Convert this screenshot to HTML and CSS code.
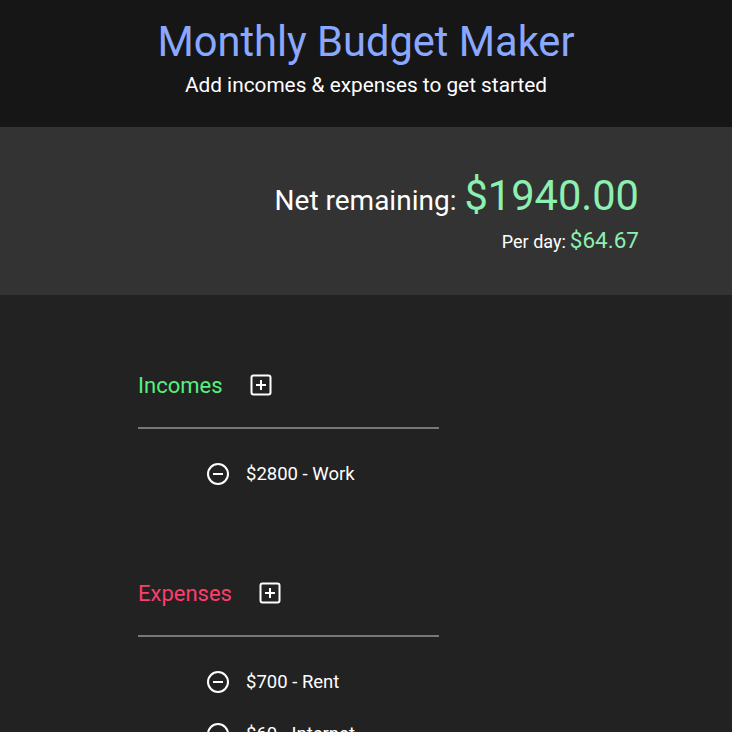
FILE: index.html
```html
<!DOCTYPE html>
<html lang="en">
<head>
<meta charset="utf-8">
<title>Monthly Budget Maker</title>
<link rel="stylesheet" href="styles.css">
</head>
<body>
<header class="header">
  <h1 class="title">Monthly Budget Maker</h1>
  <p class="subtitle">Add incomes &amp; expenses to get started</p>
</header>
<section class="summary">
  <div class="net"><span class="net-label">Net remaining:</span> <span class="net-value">$1940.00</span></div>
  <div class="perday"><span class="perday-label">Per day:</span> <span class="perday-value">$64.67</span></div>
</section>
<main class="lists">
  <section class="group">
    <div class="group-head">
      <h2 class="group-title incomes">Incomes</h2>
      <button class="icon-btn" aria-label="Add income">
        <svg width="22" height="22" viewBox="0 0 22 22"><rect x="1.5" y="1.5" width="19" height="19" rx="2" fill="none" stroke="#fff" stroke-width="2"/><path d="M11 6v10M6 11h10" stroke="#fff" stroke-width="2"/></svg>
      </button>
    </div>
    <hr class="rule">
    <ul class="items">
      <li class="item">
        <svg class="minus" width="24" height="24" viewBox="0 0 24 24"><circle cx="12" cy="12" r="10" fill="none" stroke="#fff" stroke-width="2"/><path d="M7 12h10" stroke="#fff" stroke-width="2"/></svg>
        <span class="item-text">$2800 - Work</span>
      </li>
    </ul>
  </section>
  <section class="group">
    <div class="group-head">
      <h2 class="group-title expenses">Expenses</h2>
      <button class="icon-btn" aria-label="Add expense">
        <svg width="22" height="22" viewBox="0 0 22 22"><rect x="1.5" y="1.5" width="19" height="19" rx="2" fill="none" stroke="#fff" stroke-width="2"/><path d="M11 6v10M6 11h10" stroke="#fff" stroke-width="2"/></svg>
      </button>
    </div>
    <hr class="rule">
    <ul class="items">
      <li class="item">
        <svg class="minus" width="24" height="24" viewBox="0 0 24 24"><circle cx="12" cy="12" r="10" fill="none" stroke="#fff" stroke-width="2"/><path d="M7 12h10" stroke="#fff" stroke-width="2"/></svg>
        <span class="item-text">$700 - Rent</span>
      </li>
      <li class="item">
        <svg class="minus" width="24" height="24" viewBox="0 0 24 24"><circle cx="12" cy="12" r="10" fill="none" stroke="#fff" stroke-width="2"/><path d="M7 12h10" stroke="#fff" stroke-width="2"/></svg>
        <span class="item-text">$60 - Internet</span>
      </li>
    </ul>
  </section>
</main>
</body>
</html>
```

FILE: styles.css
```css
html, body {
  margin: 0;
  padding: 0;
  background: #222222;
  color: #ffffff;
  font-family: Roboto, "Liberation Sans", sans-serif;
}
.header {
  background: #161616;
  height: 127px;
  box-sizing: border-box;
  padding-top: 18px;
  text-align: center;
}
.title {
  margin: 0;
  font-size: 41.6px;
  font-weight: 400;
  line-height: 48px;
  color: #8aa8ff;
}
.subtitle {
  margin: 7px 0 0;
  font-size: 20.8px;
  line-height: 24px;
}
.summary {
  background: #333333;
  height: 168px;
  box-sizing: border-box;
  padding: 45px 93px 0 0;
  text-align: right;
}
.net {
  line-height: 48px;
}
.net-label {
  font-size: 28px;
}
.net-value {
  font-size: 41.6px;
  margin-left: 4px;
  color: #8cf0b0;
}
.perday {
  margin-top: -2px;
  line-height: 26px;
}
.perday-label {
  font-size: 18px;
}
.perday-value {
  font-size: 22.5px;
  color: #8cf0b0;
}
.lists {
  padding: 70px 0 0 138px;
}
.group {
  width: 301px;
  margin-bottom: 84px;
}
.group-head {
  display: flex;
  align-items: center;
  gap: 27px;
  height: 40px;
}
.group-title {
  margin: 0;
  font-size: 22px;
  font-weight: 400;
}
.incomes { color: #55f07e; }
.expenses { color: #ff3d6c; }
.icon-btn {
  background: none;
  border: 0;
  padding: 0;
  display: flex;
}
.rule {
  margin: 22px 0 0;
  border: 0;
  height: 2px;
  background: #777777;
}
.items {
  list-style: none;
  margin: 30px 0 0;
  padding: 0 0 0 68px;
  display: flex;
  flex-direction: column;
  gap: 22px;
}
.item {
  display: flex;
  align-items: center;
  gap: 16px;
  height: 30px;
}
.item-text {
  font-size: 18.5px;
}
```
